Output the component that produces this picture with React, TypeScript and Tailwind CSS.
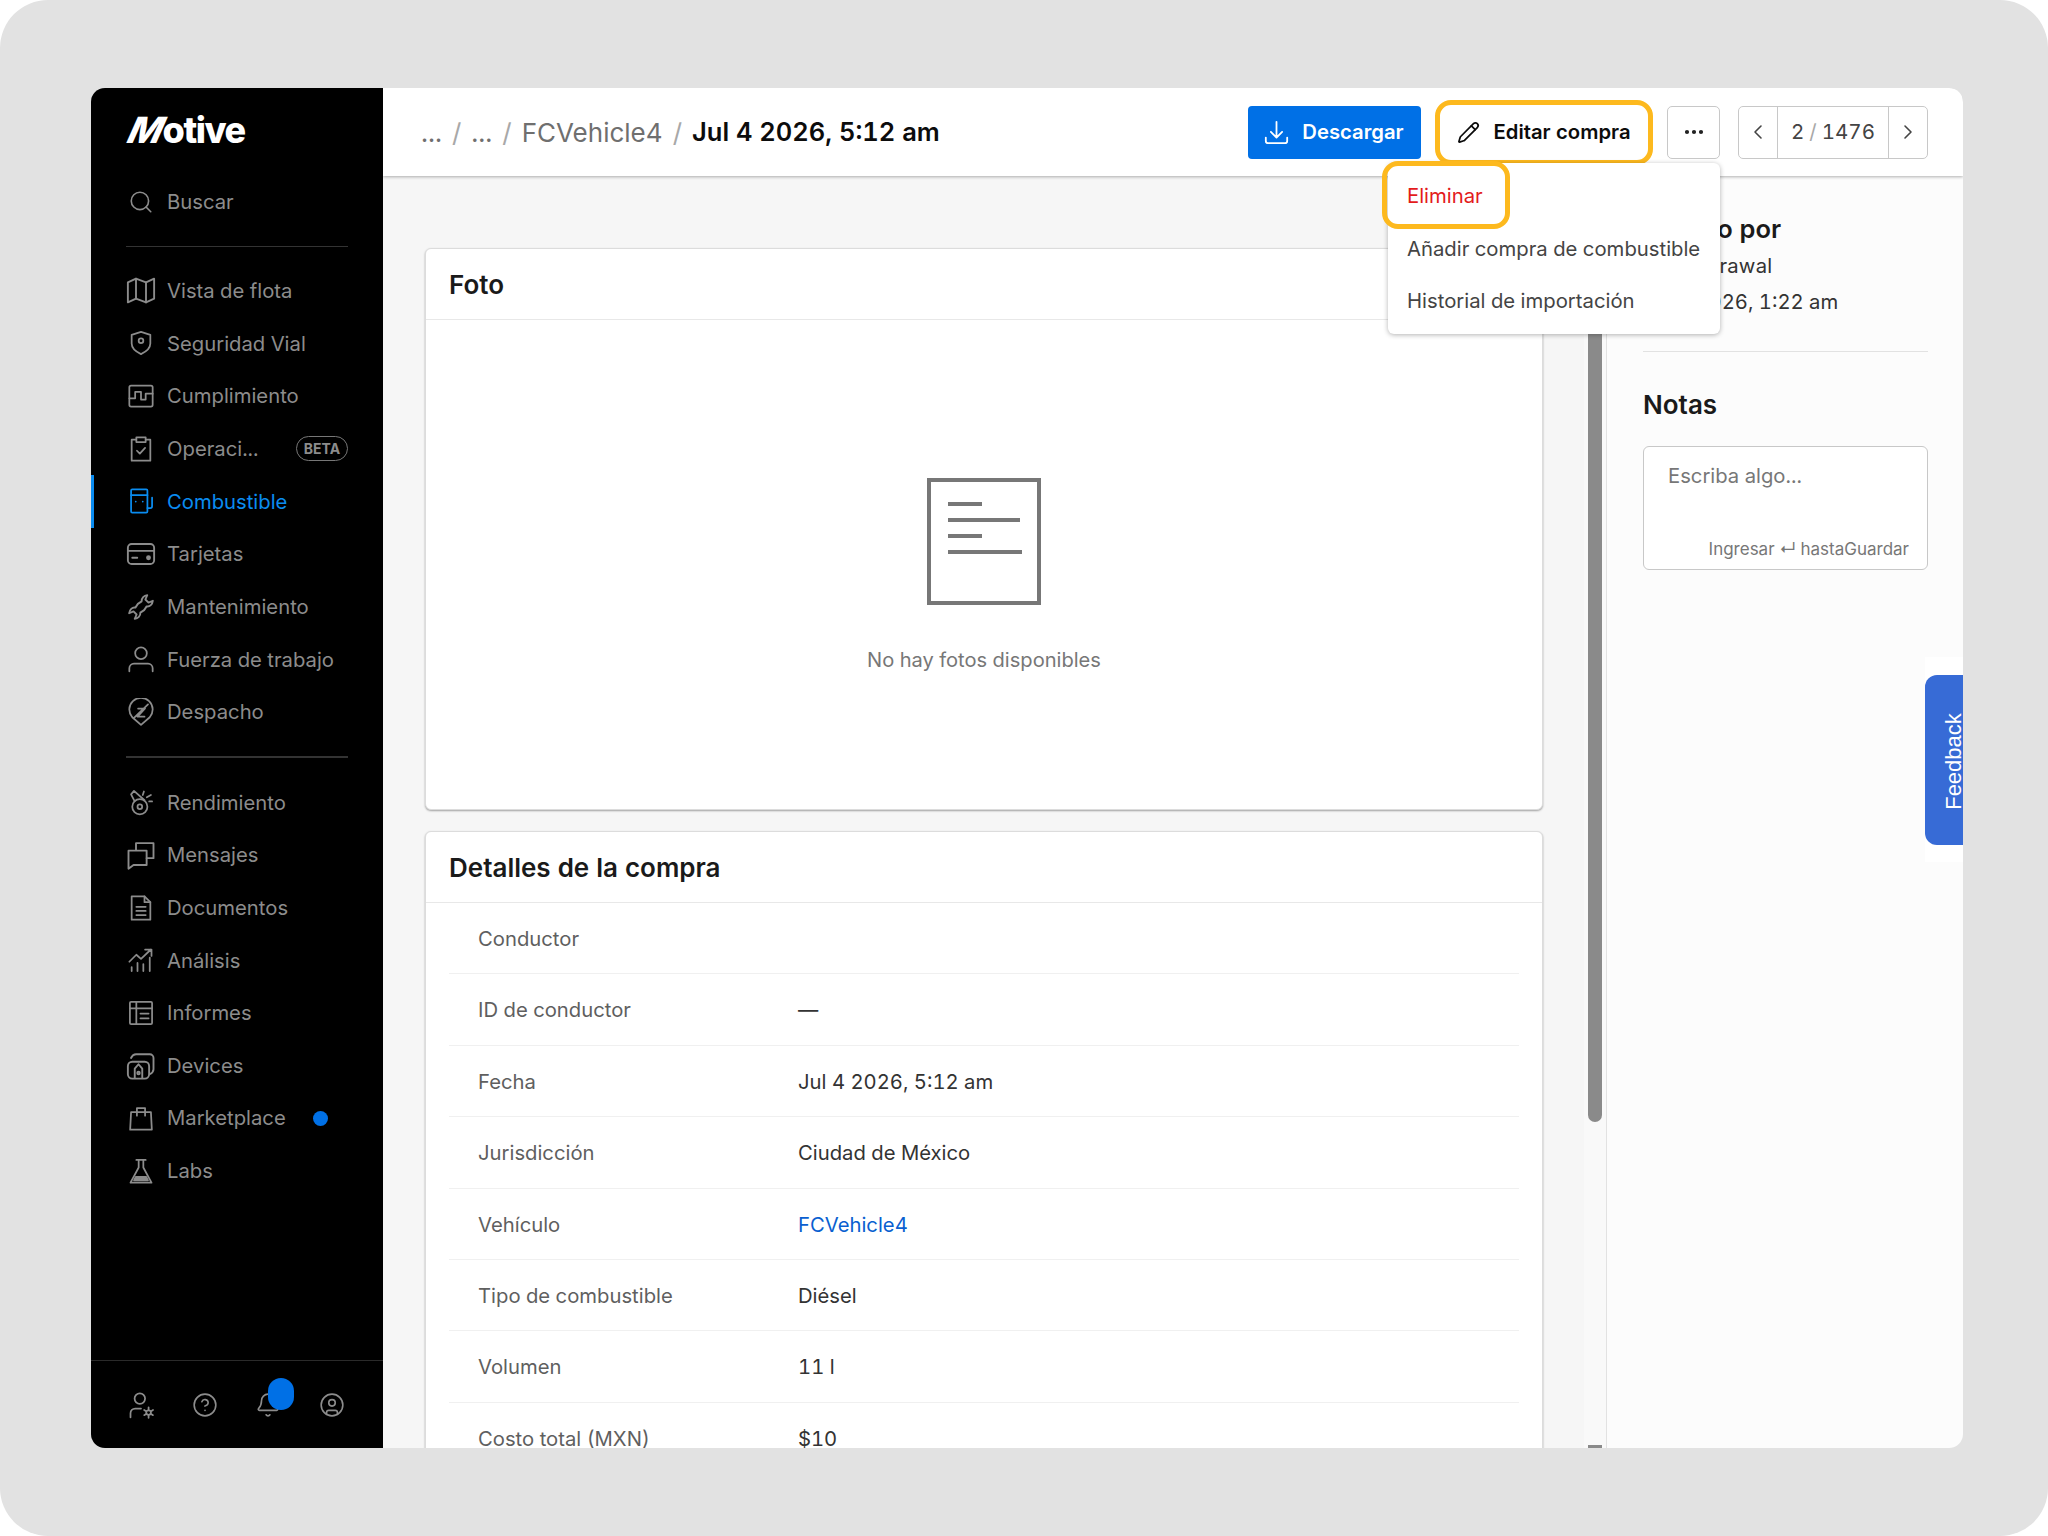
import { Bell, ChevronLeft, ChevronRight, CircleHelp, CircleUser, Ellipsis, Pencil, Search } from "lucide-react";
import type { ReactNode } from "react";

type IconProps = { children: ReactNode; size?: number; color?: string };

function Glyph({ children, size = 28, color = "#8c8c8c" }: IconProps) {
  return (
    <svg width={size} height={size} viewBox="0 0 24 24" fill="none" stroke={color} strokeWidth={1.5} strokeLinejoin="round" strokeLinecap="round">
      {children}
    </svg>
  );
}

const MapIcon = () => (
  <Glyph size={31}>
    <path d="M1.5 5.500 8 2.500l8 3 6.500-3v16l-6.500 3-8-3-6.500 3z" />
    <path d="M8 2.500v16M16 5.500v16" />
  </Glyph>
);
const ShieldIcon = () => (
  <Glyph>
    <path d="M12 2.500 20 5v7.500c0 4-3.500 7-8 9-4.500-2-8-5-8-9V5z" />
    <circle cx="12" cy="10" r="2" />
  </Glyph>
);
const ComplianceIcon = () => (
  <Glyph>
    <rect x="2" y="3" width="20" height="18" rx="1.500" />
    <path d="M2 14h5V8.500h5V15h4v-5h6" />
  </Glyph>
);
const ClipboardIcon = () => (
  <Glyph>
    <path d="M8 4H4v18h16V4h-4" />
    <rect x="8" y="2" width="8" height="4" />
    <path d="m8.500 13.500 2.500 2.500 4.500-5" />
  </Glyph>
);
const FuelIcon = () => (
  <Glyph color="#0a8cf0">
    <rect x="3.500" y="2" width="14" height="20" rx="1" />
    <path d="M3.500 7h14M7.500 12.500h.01M13.500 12.500h.01M17.500 18h2.500c1 0 1.500-.8 1.500-1.500V9" />
  </Glyph>
);
const CardIcon = () => (
  <Glyph size={30}>
    <rect x="1.500" y="4" width="21" height="16" rx="3" />
    <path d="M1.500 9.500h21M5 15h4" />
    <circle cx="18" cy="15" r="1.200" fill="#8c8c8c" />
  </Glyph>
);
const WrenchIcon = () => (
  <Glyph size={30}>
    <path d="M9.500 9.500 12.500 7.500C12.300 4.800 14.500 2.800 17 2.500L15.500 6 18 8.500 21.500 7c-.3 2.800-2.500 5-5 4.500L14.500 14.500 11.500 16.500c.2 2.700-2 4.700-4.500 5L8.500 18 6 15.500 2.500 17c.3-2.800 2.500-5 5-4.500z" />
  </Glyph>
);
const UserIcon = () => (
  <Glyph>
    <circle cx="12" cy="7" r="5" />
    <path d="M2 22.500V20a4 4 0 0 1 4-4h12a4 4 0 0 1 4 4v2.500" />
  </Glyph>
);
const DispatchIcon = () => (
  <Glyph>
    <path d="M12 23 4.500 16.500a10 10 0 1 1 15 0z" />
    <path d="M9.500 9h6l-6.500 7h6M18 5.500 6 17" />
  </Glyph>
);
const WhistleIcon = () => (
  <Glyph>
    <circle cx="11" cy="16" r="6.500" />
    <circle cx="11" cy="16" r="2" />
    <path d="M6.500 11.300 3.500 5.500 6 2.500l9 8M13.500 6l1-3M17 8l3.500-2M19 11.500h2.500" />
  </Glyph>
);
const MessagesIcon = () => (
  <Glyph size={30}>
    <path d="M8 8V2.500h14v12h-5.500" />
    <path d="M2 8.500h14.500V20H6l-4 3z" />
  </Glyph>
);
const DocIcon = () => (
  <Glyph>
    <path d="M4 2h11l5 5v15H4z" />
    <path d="M15 2v5h5M8 11h8M8 14.500h8M8 18h8" />
  </Glyph>
);
const ChartIcon = () => (
  <Glyph>
    <path d="M2 13.500 8 7.500l4 3.500 8.500-8M15.500 3H21v5.500M4 21.500V18M9 21.500v-7M14 21.500v-6M19.500 21.500V10" />
  </Glyph>
);
const ReportIcon = () => (
  <Glyph>
    <rect x="2.500" y="2.500" width="19" height="19" rx="1" />
    <path d="M2.500 8h19M8 2.500v19M11.500 12.500h7M11.500 16.500h7" />
  </Glyph>
);
const DevicesIcon = () => (
  <Glyph size={31}>
    <path d="M4 6c1-2 2-3 4-3h11a3 3 0 0 1 3 3v9c0 2-1 3-3 4" />
    <rect x="1.500" y="9" width="17" height="13.500" rx="3.500" />
    <path d="M7 22V14.500L10 11l3 3.500V22" />
    <circle cx="10" cy="18" r="1" />
  </Glyph>
);
const BagIcon = () => (
  <Glyph>
    <path d="M3.500 7h17l.8 15H2.700z" />
    <path d="M8.500 10V3.500h7V10" />
  </Glyph>
);
const FlaskIcon = () => (
  <Glyph>
    <path d="M8 2.500h8M10 2.500V9L3 22h18l-7-13V2.500" />
    <path d="M7.500 17h9l1.500 3H6z" fill="#8c8c8c" />
  </Glyph>
);
const UserGearIcon = () => (
  <Glyph>
    <circle cx="11" cy="6.500" r="4.500" />
    <path d="M3 22.500V19a4 4 0 0 1 4-4h5" />
    <circle cx="18.500" cy="18.500" r="2" />
    <path d="M18.500 14v2M18.500 21v2M14.700 16.300l1.700 1M20.600 19.700l1.700 1M14.700 20.700l1.700-1M20.600 17.300l1.700-1" />
  </Glyph>
);

const mainNav = [
  { label: "Vista de flota", icon: <MapIcon /> },
  { label: "Seguridad Vial", icon: <ShieldIcon /> },
  { label: "Cumplimiento", icon: <ComplianceIcon /> },
  { label: "Operaci...", icon: <ClipboardIcon />, beta: true },
  { label: "Combustible", icon: <FuelIcon />, active: true },
  { label: "Tarjetas", icon: <CardIcon /> },
  { label: "Mantenimiento", icon: <WrenchIcon /> },
  { label: "Fuerza de trabajo", icon: <UserIcon /> },
  { label: "Despacho", icon: <DispatchIcon /> },
];

const moreNav = [
  { label: "Rendimiento", icon: <WhistleIcon /> },
  { label: "Mensajes", icon: <MessagesIcon /> },
  { label: "Documentos", icon: <DocIcon /> },
  { label: "Análisis", icon: <ChartIcon /> },
  { label: "Informes", icon: <ReportIcon /> },
  { label: "Devices", icon: <DevicesIcon /> },
  { label: "Marketplace", icon: <BagIcon />, dot: true },
  { label: "Labs", icon: <FlaskIcon /> },
];

const details = [
  { label: "Conductor", value: "" },
  { label: "ID de conductor", value: "—" },
  { label: "Fecha", value: "Jul 4 2026, 5:12 am" },
  { label: "Jurisdicción", value: "Ciudad de México" },
  { label: "Vehículo", value: "FCVehicle4", link: true },
  { label: "Tipo de combustible", value: "Diésel" },
  { label: "Volumen", value: "11 l" },
  { label: "Costo total (MXN)", value: "$10" },
];

type NavItemProps = { label: string; icon: ReactNode; beta?: boolean; active?: boolean; dot?: boolean };

function NavItem({ label, icon, beta, active, dot }: NavItemProps) {
  return (
    <div className="relative flex h-[52.67px] items-center">
      {active && <div className="absolute -left-[35px] top-0 h-full w-[3px] bg-[#0a8cf0]" />}
      <div className="flex w-[30px] shrink-0 justify-center">{icon}</div>
      <span className={`ml-[11px] pt-[1px] text-[20.250px] ${active ? "text-[#0a8cf0]" : "text-[#8c8c8c]"}`}>{label}</span>
      {beta && (
        <span className="ml-auto flex h-[25px] w-[52px] items-center justify-center rounded-full border border-[#777777] text-[14px] font-bold text-[#8c8c8c]">
          BETA
        </span>
      )}
      {dot && <span className="ml-auto mr-[20px] h-[15px] w-[15px] rounded-full bg-[#0070e6]" />}
    </div>
  );
}

function Sidebar() {
  return (
    <aside className="flex h-full w-[292px] shrink-0 flex-col bg-black">
      <div className="flex h-[88px] items-center pb-[5px] pl-[39px] text-[36px] font-extrabold tracking-[-0.04em] text-white">
        <span className="inline-block -skew-x-[24deg]">M</span>
        <span>otive</span>
      </div>
      <div className="flex h-[52px] items-center pl-[35px]">
        <div className="flex w-[30px] justify-center">
          <Search size={26} color="#8c8c8c" strokeWidth={1.5} />
        </div>
        <span className="ml-[11px] text-[20.250px] text-[#8c8c8c]">Buscar</span>
      </div>
      <div className="mx-[35px] mt-[18px] h-px bg-[#333333]" />
      <nav className="mt-[17.500px] px-[35px]">
        {mainNav.map((item) => (
          <NavItem key={item.label} {...item} />
        ))}
      </nav>
      <div className="mx-[35px] mt-[18px] h-[2px] bg-[#333333]" />
      <nav className="mt-[17.500px] px-[35px]">
        {moreNav.map((item) => (
          <NavItem key={item.label} {...item} />
        ))}
      </nav>
      <div className="mt-auto flex h-[88px] items-center border-t border-[#2a2a2a] pl-[18px]">
        <div className="flex w-[64px] justify-center">
          <UserGearIcon />
        </div>
        <div className="flex w-[63px] justify-center">
          <CircleHelp size={26} color="#8c8c8c" strokeWidth={1.5} />
        </div>
        <div className="relative flex w-[63px] justify-center">
          <Bell size={26} color="#8c8c8c" strokeWidth={1.5} />
          <span className="absolute left-[32px] -top-[14px] h-[32px] w-[26px] rounded-[13px] bg-[#0070e6]" />
        </div>
        <div className="flex w-[66px] justify-center">
          <CircleUser size={26} color="#8c8c8c" strokeWidth={1.5} />
        </div>
      </div>
    </aside>
  );
}

function Header() {
  return (
    <header className="relative z-10 flex h-[88px] shrink-0 items-center bg-white pl-[38px] pr-[35px] shadow-[0_1px_3px_rgba(0,0,0,0.3)]">
      <div className="flex flex-1 items-center text-[26px] text-[#6f6f6f]">
        <span>...</span>
        <span className="mx-[10px] text-[#a8a8a8]">/</span>
        <span>...</span>
        <span className="mx-[10px] text-[#a8a8a8]">/</span>
        <span>FCVehicle4</span>
        <span className="mx-[10px] text-[#a8a8a8]">/</span>
        <span className="text-[25.500px] font-semibold text-[#0c0c0c]">Jul 4 2026, 5:12 am</span>
      </div>
      <button className="flex h-[53px] w-[173px] items-center justify-center gap-[12px] rounded-[4px] bg-[#0070e6] pr-[2px] text-[20.250px] font-semibold text-white">
        <svg width="27" height="27" viewBox="0 0 24 24" fill="none" stroke="white" strokeWidth={1.6} strokeLinecap="round" strokeLinejoin="round">
          <path d="M12 2.500V16M7 11.500l5 5 5-5M2.500 16.500v3a2 2 0 0 0 2 2h15a2 2 0 0 0 2-2v-3" />
        </svg>
        Descargar
      </button>
      <div className="relative ml-[17px]">
        <button className="flex h-[53px] w-[212px] items-center justify-center gap-[13px] rounded-[4px] bg-white text-[20.250px] font-semibold text-[#0c0c0c]">
          <Pencil size={23} strokeWidth={1.8} />
          Editar compra
        </button>
        <div className="absolute -inset-x-[3px] -inset-y-[6px] rounded-[16px] border-[5px] border-[#fdb91e]" />
      </div>
      <button className="ml-[17px] flex h-[53px] w-[53px] items-center justify-center rounded-[5px] border border-[#c8c8c8] bg-white">
        <Ellipsis size={24} strokeWidth={2.2} color="#222222" />
      </button>
      <div className="ml-[18px] flex h-[53px] w-[190px] items-center rounded-[5px] border border-[#c8c8c8] bg-white text-[20.500px] text-[#444444]">
        <div className="flex h-full w-[39px] items-center justify-center border-r border-[#c8c8c8]">
          <ChevronLeft size={24} strokeWidth={1.6} />
        </div>
        <div className="flex flex-1 items-center justify-center gap-[5px]">
          <span>2</span>
          <span className="text-[#a8a8a8]">/</span>
          <span>1476</span>
        </div>
        <div className="flex h-full w-[39px] items-center justify-center border-l border-[#c8c8c8]">
          <ChevronRight size={24} strokeWidth={1.6} />
        </div>
      </div>
    </header>
  );
}

function Card({ title, children, className }: { title: string; children: ReactNode; className: string }) {
  return (
    <section className={`rounded-[6px] border border-[#dcdcdc] bg-white shadow-[0_1px_2px_rgba(0,0,0,0.35)] ${className}`}>
      <div className="flex h-[71px] items-center border-b border-[#e8e8e8] pl-[23px] pt-[1px] text-[26px] font-semibold text-[#1a1a1a]">
        {title}
      </div>
      {children}
    </section>
  );
}

function RightPanel() {
  return (
    <aside className="flex-1 border-l border-[#e2e2e2] bg-[#fcfcfc] pl-[36px] pr-[35px] pt-[38px]">
      <h3 className="h-[30px] text-[25.500px] font-semibold leading-[30px] text-[#1a1a1a]">Creado por</h3>
      <p className="mt-[8px] h-[28px] text-[20.250px] leading-[28px] tracking-[0.2px] text-[#333333]">Amit Agrawal</p>
      <p className="mt-[8px] h-[28px] text-[20.250px] leading-[28px] text-[#333333]">Jul 4 2026, 1:22 am</p>
      <div className="mt-[35px] h-px bg-[#e2e2e2]" />
      <h3 className="mt-[38px] h-[30px] text-[26px] font-semibold leading-[30px] text-[#1a1a1a]">Notas</h3>
      <div className="mt-[26px] flex h-[124px] flex-col justify-between rounded-[6px] border border-[#c8c8c8] bg-white pb-[8px] pl-[24px] pr-[18px] pt-[15px]">
        <span className="text-[20.250px] leading-[28px] text-[#777777]">Escriba algo...</span>
        <span className="self-end text-[17px] leading-[24px] text-[#777777]">Ingresar ↵ hastaGuardar</span>
      </div>
    </aside>
  );
}

export default function App() {
  return (
    <div className="h-[1536px] w-[2048px] bg-white font-['Inter',sans-serif] tabular-nums">
      <div className="h-full w-full rounded-[48px] bg-[#e2e2e2] pl-[91px] pt-[88px]">
        <div className="relative flex h-[1360px] w-[1872px] overflow-hidden rounded-[14px]">
          <Sidebar />
          <div className="flex min-w-0 flex-1 flex-col">
            <Header />
            <div className="flex min-h-0 flex-1">
              <main className="w-[1201px] shrink-0 overflow-hidden bg-[#f6f6f6] pl-[42px] pr-[41px] pt-[72px]">
                <Card title="Foto" className="h-[562px]">
                  <div className="flex flex-col items-center pt-[158px]">
                    <svg width="114" height="127" viewBox="0 0 114 127" fill="none" stroke="#777777" strokeWidth={4}>
                      <rect x="2" y="2" width="110" height="123" />
                      <path d="M21 26h34M21 42h72M21 58h34M21 74h74" />
                    </svg>
                    <p className="mt-[41px] text-[20.100px] leading-[28px] text-[#777777]">No hay fotos disponibles</p>
                  </div>
                </Card>
                <Card title="Detalles de la compra" className="mt-[21px]">
                  <div className="px-[23px]">
                    {details.map((row) => (
                      <div key={row.label} className="flex h-[71.400px] items-center border-b border-[#f0f0f0] pl-[29px] pt-[2px] text-[20.250px]">
                        <span className="w-[320px] text-[#5f5f5f]">{row.label}</span>
                        <span className={row.link ? "text-[#0a5fd0]" : "text-[#333333]"}>{row.value}</span>
                      </div>
                    ))}
                  </div>
                </Card>
              </main>
              <div className="relative w-[22px] shrink-0 bg-[#f9f9f9]">
                <div className="absolute left-[4px] top-[6px] h-[940px] w-[14px] rounded-b-full bg-[#8a8a8a]" />
                <div className="absolute bottom-0 left-[4px] h-[3px] w-[14px] bg-[#8a8a8a]" />
              </div>
              <RightPanel />
            </div>
          </div>

          <div className="absolute left-[1297px] top-[75px] z-20 h-[171px] w-[332px] rounded-[6px] bg-white pl-[19px] pt-[7px] text-[20.300px] text-[#444444] shadow-[0_1px_5px_rgba(0,0,0,0.3)]">
            <div className="flex h-[52.600px] items-center text-[#e31b1b]">Eliminar</div>
            <div className="flex h-[52.600px] items-center">Añadir compra de combustible</div>
            <div className="flex h-[52.600px] items-center">Historial de importación</div>
            <div className="absolute -left-[6px] -top-[2px] h-[68px] w-[128px] rounded-[16px] border-[5px] border-[#fdb91e]" />
          </div>

          <div className="absolute right-0 top-[569px] z-20 h-[205px] w-[38px] overflow-hidden bg-white pb-[17px] pt-[18px]">
            <div className="flex h-full w-[56px] items-center justify-center rounded-[12px] bg-[#376bd6] pt-[3px]">
              <span className="-rotate-90 whitespace-nowrap font-['Liberation_Sans',sans-serif] text-[22px] text-white">Feedback</span>
            </div>
          </div>
        </div>
      </div>
    </div>
  );
}
